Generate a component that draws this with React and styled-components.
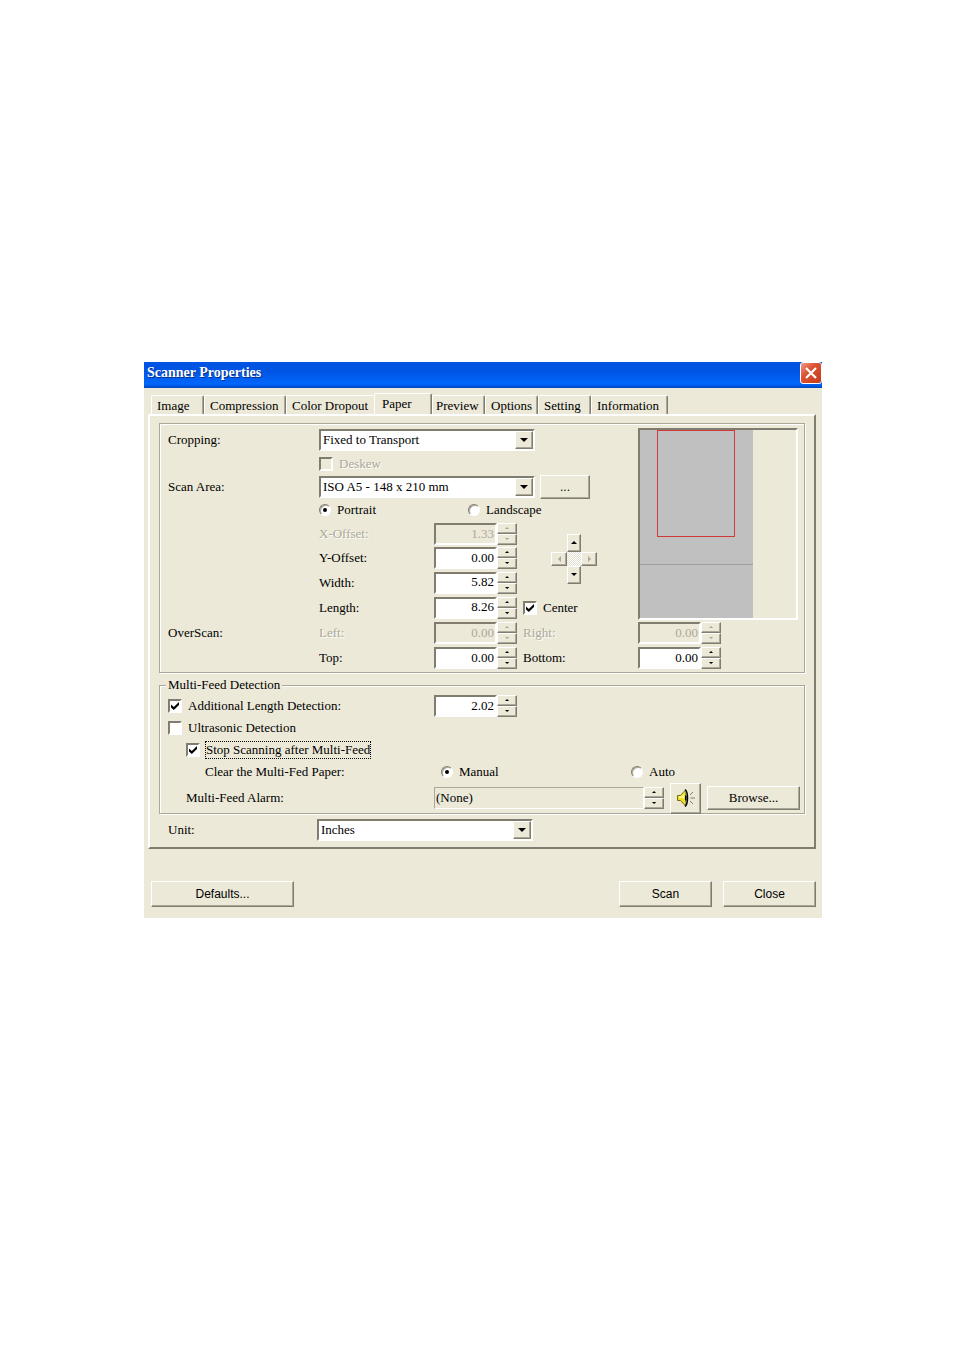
import React, { useState } from 'react'
import styled, { createGlobalStyle } from 'styled-components'

const face = '#ece9d8'
const shade = '#aca899'
const dark = '#807d70'

const GlobalStyle = createGlobalStyle`
*{
  box-sizing:border-box;
}
body{
  margin:0;
  background:#fff;
  color:#000;
  font-family:"Liberation Serif", "Times New Roman", serif;
  font-size:13px;
  line-height:16px;
}
button, input, select{
  font:inherit;
  color:inherit;
  margin:0;
  padding:0;
}
`
const Page = styled.main`
padding:362px 132px 40px 144px;
`
const Dialog = styled.section`
background:${face};
min-width:678px;
`
const TitleBar = styled.header`
display:flex;
justify-content:space-between;
align-items:flex-start;
height:26px;
padding-left:3px;
background:linear-gradient(#0054e3, #0054e3 35%, #0067fc 85%, #0046c0);
`
const Title = styled.h1`
margin:0;
color:#fff;
font-size:14px;
line-height:22px;
text-shadow:1px 1px 0 #0b2f8a;
`
const CloseButton = styled.button`
display:flex;
align-items:center;
justify-content:center;
width:22px;
height:22px;
border:1px solid #fff;
border-radius:3px;
background:linear-gradient(135deg, #ee9c84, #dc5134 40%, #c33c1c);
`
const Content = styled.div`
padding:5px 6px 11px 4px;
`
const TabStrip = styled.nav`
display:flex;
align-items:flex-end;
height:21px;
padding-left:3px;
`
const Tab = styled.button`
width:${p => p.$width}px;
height:${p => p.$active ? 21 : 19}px;
padding-left:${p => p.$pad || 5}px;
padding-top:${p => p.$active ? 0 : 2}px;
border:0;
border-top:1px solid #fff;
border-left:1px solid #fff;
border-right:${p => p.$covered ? 0 : 1}px solid ${dark};
border-radius:2px 2px 0 0;
box-shadow:${p => p.$covered ? 'none' : `inset -1px 0 0 ${shade}`};
background:${face};
text-align:left;
white-space:nowrap;
`
const Panel = styled.div`
padding:7px 9px 6px;
border:2px solid;
border-color:#fff ${dark} ${dark} #fff;
`
const Group = styled.fieldset`
min-width:0;
margin:0 0 ${p => p.$gap || 0}px;
padding:0 0 0 8px;
border:1px solid ${shade};
box-shadow:1px 1px 0 #fff, inset 1px 1px 0 #fff;
`
const Legend = styled.legend`
margin-left:-2px;
padding:0 2px;
background:${face};
`
const PaperGrid = styled.div`
display:grid;
grid-template-columns:151px 115px 89px 115px 1fr;
grid-template-rows:24px 23px 23px 24px 24px 24px 25px 25px 26px 24px;
align-items:center;
padding:4px 0 2px;
`
const Name = styled.label`
grid-column:${p => p.$col || 1};
color:${p => p.$off ? shade : '#000'};
text-shadow:${p => p.$off ? '1px 1px 0 #fff' : 'none'};
white-space:nowrap;
`
const Line = styled.div`
grid-column:2 / 5;
display:flex;
align-items:center;
gap:${p => p.$gap || 0}px;
`
const PadCell = styled.div`
grid-column:4;
grid-row:5 / 8;
padding-left:28px;
`
const PreviewCell = styled.div`
grid-column:5;
grid-row:1 / 9;
align-self:start;
`
const PreviewBox = styled.div`
width:160px;
height:192px;
border:2px solid;
border-color:${dark} #fff #fff ${dark};
svg{
  display:block;
}
`
const SelectBox = styled.span`
display:grid;
grid-template-columns:1fr 18px;
width:216px;
height:22px;
border:2px solid;
border-color:${dark} #fff #fff ${dark};
background:#fff;
`
const Select = styled.select`
grid-area:1 / 1 / 2 / 3;
appearance:none;
border:0;
padding-left:2px;
background:transparent;
outline:0;
`
const SelectArrow = styled.span`
grid-area:1 / 2;
display:flex;
align-items:center;
justify-content:center;
pointer-events:none;
border:1px solid;
border-color:#fff ${dark} ${dark} #fff;
box-shadow:inset -1px -1px 0 ${shade};
background:${face};
`
const Button = styled.button`
display:flex;
align-items:center;
justify-content:center;
width:${p => p.$width}px;
height:${p => p.$height}px;
border:1px solid;
border-color:#fff ${dark} ${dark} #fff;
box-shadow:inset -1px -1px 0 ${shade};
background:${face};
font-family:${p => p.$sans ? '"Liberation Sans", Arial, sans-serif' : 'inherit'};
font-size:${p => p.$sans ? 12 : 13}px;
`
const SpinBox = styled.span`
display:flex;
width:${p => p.$wide ? 230 : 83}px;
height:22px;
`
const SpinInput = styled.input`
flex:1;
min-width:0;
border:${p => p.$flat ? 1 : 2}px solid;
border-color:${p => p.$flat ? shade : dark} #fff #fff ${p => p.$flat ? shade : dark};
border-radius:0;
padding:0 1px 1px;
background:${p => p.$flat || p.disabled ? face : '#fff'};
color:${p => p.disabled ? shade : '#000'};
text-align:${p => p.$flat ? 'left' : 'right'};
outline:0;
`
const SpinButtons = styled.span`
display:grid;
grid-template-rows:11px 11px;
`
const CheckLabel = styled.label`
display:flex;
align-items:center;
gap:6px;
width:${p => p.$width ? p.$width + 'px' : 'auto'};
color:${p => p.$off ? shade : '#000'};
text-shadow:${p => p.$off ? '1px 1px 0 #fff' : 'none'};
white-space:nowrap;
`
const Tick = styled.span`
display:grid;
width:14px;
height:14px;
svg{
  grid-area:1 / 1;
  place-self:center;
  pointer-events:none;
}
`
const CheckInput = styled.input`
grid-area:1 / 1;
appearance:none;
border:2px solid;
border-color:${dark} #fff #fff ${dark};
background:${p => p.disabled ? face : '#fff'};
`
const RadioInput = styled.input`
display:grid;
place-items:center;
width:12px;
height:12px;
appearance:none;
border:1px solid;
border-color:${dark} #fff #fff ${dark};
border-radius:50%;
background:#fff;
box-shadow:inset 1px 1px 0 ${shade};
&:checked::after{
  content:"";
  width:4px;
  height:4px;
  border-radius:50%;
  background:#000;
}
`
const FocusText = styled.span`
outline:1px dotted #000;
`
const FeedGrid = styled.div`
display:grid;
grid-template-columns:266px 197px 1fr;
grid-template-rows:22px 22px 22px 22px 30px;
align-items:center;
padding-top:2px;
`
const Indent = styled.div`
grid-column:${p => p.$col || 1};
padding-left:${p => p.$by}px;
white-space:nowrap;
`
const AlarmLine = styled.div`
grid-column:2 / 4;
display:flex;
align-items:center;
gap:6px;
`
const UnitLine = styled.div`
display:grid;
grid-template-columns:149px 1fr;
align-items:center;
padding-left:9px;
`
const Pad = styled.div`
display:grid;
grid-template-columns:16px 14px 16px;
grid-template-rows:18px 14px 18px;
width:46px;
`
const PadButton = styled.button`
grid-area:${p => p.$area};
display:flex;
align-items:center;
justify-content:center;
border:1px solid;
border-color:#fff ${dark} ${dark} #fff;
box-shadow:inset -1px -1px 0 ${shade};
background:${face};
`
const PadCenter = styled.span`
grid-area:2 / 2;
background:repeating-conic-gradient(#fff 0 25%, #e2dfd0 0 50%) 0 0 / 2px 2px;
`
const Footer = styled.footer`
display:flex;
align-items:center;
gap:11px;
margin-top:32px;
padding-left:3px;
`
const Spacer = styled.span`
flex:1;
`

const points = {
  up: '0,3 6,3 3,0',
  down: '0,0 6,0 3,3',
  left: '3,0 3,6 0,3',
  right: '0,0 0,6 3,3',
}

function Arrow({ dir, size = 1, off }) {
  const flat = dir === 'up' || dir === 'down'
  const w = flat ? 6 : 3
  const h = flat ? 3 : 6
  return (
    <svg width={w * size} height={h * size} viewBox={`0 0 ${w} ${h}`} aria-hidden="true">
      <polygon points={points[dir]} fill={off ? shade : '#000'} />
    </svg>
  )
}

function DropDown({ id, options }) {
  return (
    <SelectBox>
      <Select id={id}>
        {options.map(o => <option key={o}>{o}</option>)}
      </Select>
      <SelectArrow>
        <svg width="8" height="4" viewBox="0 0 8 4"><polygon points="0,0 8,0 4,4" /></svg>
      </SelectArrow>
    </SelectBox>
  )
}

function Spinner({ id, label, value, disabled, wide }) {
  return (
    <SpinBox $wide={wide}>
      <SpinInput id={id} aria-label={label} defaultValue={value} disabled={disabled} readOnly={wide} $flat={wide} />
      <SpinButtons>
        <Button $width={20} $height={11} disabled={disabled} aria-label="Increase"><Arrow dir="up" size={0.7} off={disabled} /></Button>
        <Button $width={20} $height={11} disabled={disabled} aria-label="Decrease"><Arrow dir="down" size={0.7} off={disabled} /></Button>
      </SpinButtons>
    </SpinBox>
  )
}

function Check({ label, checked, disabled, focus }) {
  const [on, setOn] = useState(!!checked)
  return (
    <CheckLabel $off={disabled}>
      <Tick>
        <CheckInput type="checkbox" checked={on} disabled={disabled} onChange={e => setOn(e.target.checked)} />
        {on && (
          <svg width="8" height="8" viewBox="0 0 8 8">
            <path d="M0 2.5v3L2.8 8 8 3V0L2.8 5z" />
          </svg>
        )}
      </Tick>
      {focus ? <FocusText>{label}</FocusText> : label}
    </CheckLabel>
  )
}

function Radio({ name, label, checked, width }) {
  return (
    <CheckLabel $width={width}>
      <RadioInput type="radio" name={name} defaultChecked={checked} />
      {label}
    </CheckLabel>
  )
}

function Speaker() {
  return (
    <svg width="20" height="20" viewBox="0 0 20 20" aria-hidden="true">
      <path d="M1.5 7.5h3L9.5 2v16l-5-5.500h-3z" fill="#f0e020" stroke="#77710c" />
      <path d="M3 8.500h2.500L8 6v4H3z" fill="#fffba8" />
      <path d="M9.500 1.500C12.500 5 12.500 15 9.500 18.500z" fill="#c4c4bc" />
      <path d="M9 1.500c1.500 1 2.500 4 2.500 8.500s-1 7.500-2.500 8.500" fill="none" stroke="#000" strokeWidth="1.500" />
      <path d="M9 7.500h1.500v5H9z" fill="#000" />
      <path d="M14 7l3-3M14.500 10H19M14 13l3 3" stroke={dark} fill="none" />
    </svg>
  )
}

function App() {
  return (
    <Page>
      <GlobalStyle />
      <Dialog>
        <TitleBar>
          <Title>Scanner Properties</Title>
          <CloseButton aria-label="Close window">
            <svg width="12" height="12" viewBox="0 0 12 12">
              <path d="M1 1l10 10M11 1L1 11" stroke="#fff" strokeWidth="2.200" />
            </svg>
          </CloseButton>
        </TitleBar>
        <Content>
          <TabStrip>
            <Tab $width={53}>Image</Tab>
            <Tab $width={82}>Compression</Tab>
            <Tab $width={88} $covered>Color Dropout</Tab>
            <Tab $width={58} $pad={7} $active>Paper</Tab>
            <Tab $width={53} $pad={3}>Preview</Tab>
            <Tab $width={53}>Options</Tab>
            <Tab $width={53}>Setting</Tab>
            <Tab $width={77}>Information</Tab>
          </TabStrip>
          <Panel>
            <Group $gap={4}>
              <PaperGrid>
                <Name htmlFor="cropping">Cropping:</Name>
                <Line><DropDown id="cropping" options={['Fixed to Transport', 'Automatic']} /></Line>
                <Line><Check label="Deskew" disabled /></Line>
                <Name htmlFor="area">Scan Area:</Name>
                <Line $gap={5}>
                  <DropDown id="area" options={['ISO A5 - 148 x 210 mm', 'ISO A4 - 210 x 297 mm']} />
                  <Button $width={50} $height={24} $sans>...</Button>
                </Line>
                <Line>
                  <Radio name="orient" label="Portrait" checked width={149} />
                  <Radio name="orient" label="Landscape" />
                </Line>
                <Name $col={2} $off htmlFor="xoff">X-Offset:</Name>
                <Spinner id="xoff" value="1.33" disabled />
                <PadCell>
                  <Pad>
                    <PadButton $area="1 / 2" aria-label="Move up"><Arrow dir="up" /></PadButton>
                    <PadButton $area="2 / 1" disabled aria-label="Move left"><Arrow dir="left" off /></PadButton>
                    <PadCenter />
                    <PadButton $area="2 / 3" disabled aria-label="Move right"><Arrow dir="right" off /></PadButton>
                    <PadButton $area="3 / 2" aria-label="Move down"><Arrow dir="down" /></PadButton>
                  </Pad>
                </PadCell>
                <Name $col={2} htmlFor="yoff">Y-Offset:</Name>
                <Spinner id="yoff" value="0.00" />
                <Name $col={2} htmlFor="width">Width:</Name>
                <Spinner id="width" value="5.82" />
                <Name $col={2} htmlFor="length">Length:</Name>
                <Spinner id="length" value="8.26" />
                <Check label="Center" checked />
                <Name as="span">OverScan:</Name>
                <Name $col={2} $off htmlFor="left">Left:</Name>
                <Spinner id="left" value="0.00" disabled />
                <Name $col={4} $off htmlFor="right">Right:</Name>
                <Spinner id="right" value="0.00" disabled />
                <Name $col={2} htmlFor="top">Top:</Name>
                <Spinner id="top" value="0.00" />
                <Name $col={4} htmlFor="bottom">Bottom:</Name>
                <Spinner id="bottom" value="0.00" />
                <PreviewCell>
                  <PreviewBox>
                    <svg width="156" height="188" viewBox="0 0 156 188">
                      <rect width="113" height="188" fill="#c0c0c0" />
                      <path d="M0 134.500h113" stroke="#a0a0a0" />
                      <rect x="17.500" y="0.500" width="77" height="106" fill="none" stroke="#d03a3a" />
                    </svg>
                  </PreviewBox>
                </PreviewCell>
              </PaperGrid>
            </Group>
            <Group $gap={5}>
              <Legend>Multi-Feed Detection</Legend>
              <FeedGrid>
                <Check label="Additional Length Detection:" checked />
                <Spinner id="extra" label="Additional length" value="2.02" />
                <Indent $by={0}><Check label="Ultrasonic Detection" /></Indent>
                <Indent $by={18}><Check label="Stop Scanning after Multi-Feed" checked focus /></Indent>
                <Indent $by={37}>Clear the Multi-Fed Paper:</Indent>
                <Indent $col={2} $by={7}><Radio name="clear" label="Manual" checked /></Indent>
                <Indent $col={3} $by={0}><Radio name="clear" label="Auto" /></Indent>
                <Indent $by={18}><label htmlFor="alarm">Multi-Feed Alarm:</label></Indent>
                <AlarmLine>
                  <Spinner id="alarm" value="(None)" wide />
                  <Button $width={31} $height={31} aria-label="Play alarm"><Speaker /></Button>
                  <Button $width={93} $height={24}>Browse...</Button>
                </AlarmLine>
              </FeedGrid>
            </Group>
            <UnitLine>
              <Name htmlFor="unit">Unit:</Name>
              <DropDown id="unit" options={['Inches', 'Centimeters', 'Pixels']} />
            </UnitLine>
          </Panel>
          <Footer>
            <Button $width={143} $height={26} $sans>Defaults...</Button>
            <Spacer />
            <Button $width={93} $height={26} $sans>Scan</Button>
            <Button $width={93} $height={26} $sans>Close</Button>
          </Footer>
        </Content>
      </Dialog>
    </Page>
  )
}

export default App
